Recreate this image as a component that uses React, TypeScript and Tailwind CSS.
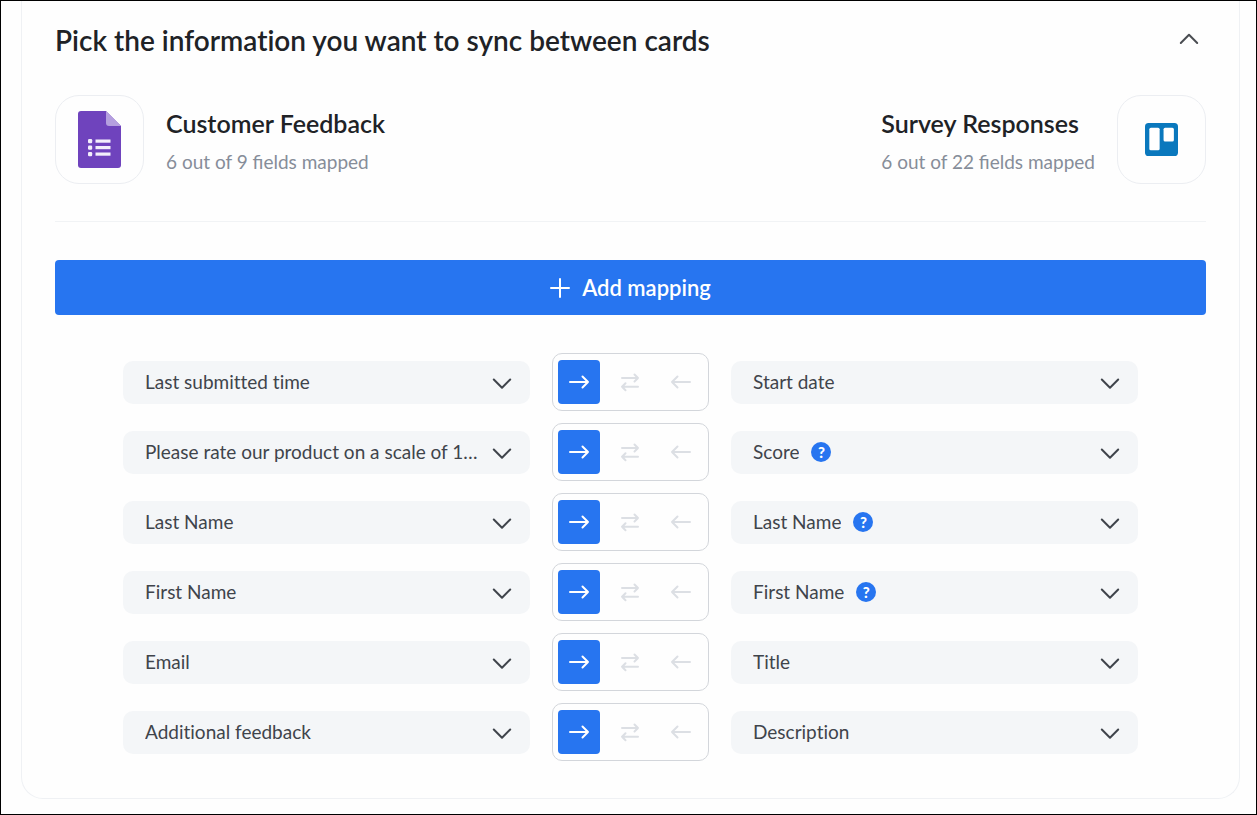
import { useState } from "react";

type Direction = "right" | "both" | "left";

interface Field {
  label: string;
  help?: boolean;
}

interface Mapping {
  source: Field;
  target: Field;
}

const mappings: Mapping[] = [
  { source: { label: "Last submitted time" }, target: { label: "Start date" } },
  {
    source: { label: "Please rate our product on a scale of 1 to 10" },
    target: { label: "Score", help: true },
  },
  { source: { label: "Last Name" }, target: { label: "Last Name", help: true } },
  { source: { label: "First Name" }, target: { label: "First Name", help: true } },
  { source: { label: "Email" }, target: { label: "Title" } },
  { source: { label: "Additional feedback" }, target: { label: "Description" } },
];

const arrowPaths: Record<Direction, string> = {
  right: "M2 11h18M14.5 5.5l5.5 5.5l-5.5 5.5",
  both: "M3 7h16M15.5 3.5l3.5 3.5l-3.5 3.5M19 15.8H3M6.5 12.3l-3.5 3.5l3.5 3.5",
  left: "M20 11H2M7.5 5.5L2 11l5.5 5.5",
};

const directions: { id: Direction; name: string }[] = [
  { id: "right", name: "Sync left to right" },
  { id: "both", name: "Sync both ways" },
  { id: "left", name: "Sync right to left" },
];

function Chevron({ up = false }: { up?: boolean }) {
  return (
    <svg viewBox="0 0 20 20" className="size-5 shrink-0" fill="none" stroke="currentColor" strokeWidth="2" strokeLinecap="round" strokeLinejoin="round" aria-hidden="true">
      <path d={up ? "M1.8 13L10 4.8l8.2 8.2" : "M1.8 7.5L10 15.7l8.2-8.2"} />
    </svg>
  );
}

function FormsLogo() {
  return (
    <svg viewBox="0 0 43 57" className="h-[57px] w-[43px]" aria-hidden="true">
      <path d="M3 0h25l15 15v39a3 3 0 0 1-3 3H3a3 3 0 0 1-3-3V3a3 3 0 0 1 3-3z" fill="#6f43bd" />
      <path d="M28 0l15 15H31a3 3 0 0 1-3-3z" fill="#b59fdf" />
      <g fill="#f3effb">
        <rect x="10" y="28" width="4.2" height="4.2" rx="1.2" />
        <rect x="10" y="34.5" width="4.2" height="4.2" rx="1.2" />
        <rect x="10" y="41" width="4.2" height="4.2" rx="1.2" />
        <rect x="17.5" y="28.5" width="15" height="3.2" />
        <rect x="17.5" y="35" width="15" height="3.2" />
        <rect x="17.5" y="41.5" width="15" height="3.2" />
      </g>
    </svg>
  );
}

function TrelloLogo() {
  return (
    <svg viewBox="0 0 32 32" className="size-[33px]" aria-hidden="true">
      <rect width="32" height="32" rx="3.5" fill="#0a78bd" />
      <rect x="4.2" y="4.5" width="10" height="22" rx="1.5" fill="#fff" />
      <rect x="18" y="4.5" width="10" height="13.5" rx="1.5" fill="#fff" />
    </svg>
  );
}

function FieldSelect({ field, name }: { field: Field; name: string }) {
  return (
    <div className="flex h-[43px] min-w-0 flex-1 items-center rounded-[10px] bg-[#f4f6f8] pr-[18px] pl-[22px] text-[#3f444b]">
      <select
        aria-label={name}
        className={
          field.help
            ? "h-full appearance-none bg-transparent text-[19px] [field-sizing:content] [font-variant-ligatures:none]"
            : "h-full min-w-0 flex-1 appearance-none truncate bg-transparent text-[19px] [font-variant-ligatures:none]"
        }
      >
        <option>{field.label}</option>
      </select>
      {field.help && (
        <button
          type="button"
          aria-label={`About ${field.label}`}
          className="ml-3 flex size-5 items-center justify-center rounded-full bg-[#2775f0] text-[15px] font-black text-white"
        >
          ?
        </button>
      )}
      <span className="pointer-events-none ml-auto flex pl-3">
        <Chevron />
      </span>
    </div>
  );
}

function DirectionToggle() {
  const [active, setActive] = useState<Direction>("right");
  return (
    <div role="group" aria-label="Sync direction" className="flex h-[58px] shrink-0 items-center gap-[9px] rounded-[10px] border border-[#d3d6db] pr-[6px] pl-[5px]">
      {directions.map(({ id, name }) => (
        <button
          key={id}
          type="button"
          aria-label={name}
          aria-pressed={active === id}
          onClick={() => setActive(id)}
          className={
            active === id
              ? "flex h-11 w-[42px] items-center justify-center rounded bg-[#2775f0] text-white"
              : "flex h-11 w-[42px] items-center justify-center rounded text-[#dcdfe4]"
          }
        >
          <svg viewBox="0 0 22 22" className="size-[22px]" fill="none" stroke="currentColor" strokeWidth="2" strokeLinecap="round" strokeLinejoin="round" aria-hidden="true">
            <path d={arrowPaths[id]} />
          </svg>
        </button>
      ))}
    </div>
  );
}

function LogoTile({ children }: { children: React.ReactNode }) {
  return (
    <div className="flex size-[89px] items-center justify-center rounded-3xl border border-[#eceef2]">
      {children}
    </div>
  );
}

function AppSummary({ title, detail }: { title: string; detail: string }) {
  return (
    <div className="pt-[3px]">
      <h3 className="text-[25px] leading-8 font-semibold text-[#202226]">{title}</h3>
      <p className="mt-[9px] text-[19px] leading-7 text-[#868d99]">{detail}</p>
    </div>
  );
}

export default function App() {
  const [open, setOpen] = useState(true);
  return (
    <main className="min-h-screen border border-black bg-[#fefefe] pr-4 pb-[15px] pl-5 font-[Lato,sans-serif]">
      <section className="rounded-b-[22px] border border-t-0 border-[#eff1f4] px-[33px] pb-[37px]">
        <header className="flex items-center justify-between pt-[19px]">
          <h2 className="text-[28px] leading-10 font-semibold text-[#202226] [font-variant-ligatures:none]">
            Pick the information you want to sync between cards
          </h2>
          <button type="button" aria-label="Toggle section" aria-expanded={open} onClick={() => setOpen(!open)} className="p-[7px] text-[#4a4d52]">
            <Chevron up={open} />
          </button>
        </header>

        {open && (
          <>
            <div className="mt-[35px] flex items-center justify-between border-b border-[#f1f3f5] pb-[37px]">
              <div className="flex items-center gap-[22px]">
                <LogoTile>
                  <FormsLogo />
                </LogoTile>
                <AppSummary title="Customer Feedback" detail="6 out of 9 fields mapped" />
              </div>
              <div className="flex items-center gap-[22px]">
                <AppSummary title="Survey Responses" detail="6 out of 22 fields mapped" />
                <LogoTile>
                  <TrelloLogo />
                </LogoTile>
              </div>
            </div>

            <button type="button" className="mt-[38px] flex h-[55px] w-full items-center justify-center gap-3 rounded bg-[#2775f0] text-[22px] font-semibold text-white">
              <svg viewBox="0 0 20 20" className="size-5" fill="none" stroke="currentColor" strokeWidth="2" strokeLinecap="round" aria-hidden="true">
                <path d="M10 1v18M1 10h18" />
              </svg>
              Add mapping
            </button>

            <div className="mx-[68px] mt-[38px] flex flex-col gap-3">
              {mappings.map(({ source, target }) => (
                <div key={source.label} className="flex items-center gap-[22px]">
                  <FieldSelect field={source} name={`Customer Feedback field for ${target.label}`} />
                  <DirectionToggle />
                  <FieldSelect field={target} name={`Survey Responses field for ${source.label}`} />
                </div>
              ))}
            </div>
          </>
        )}
      </section>
    </main>
  );
}
